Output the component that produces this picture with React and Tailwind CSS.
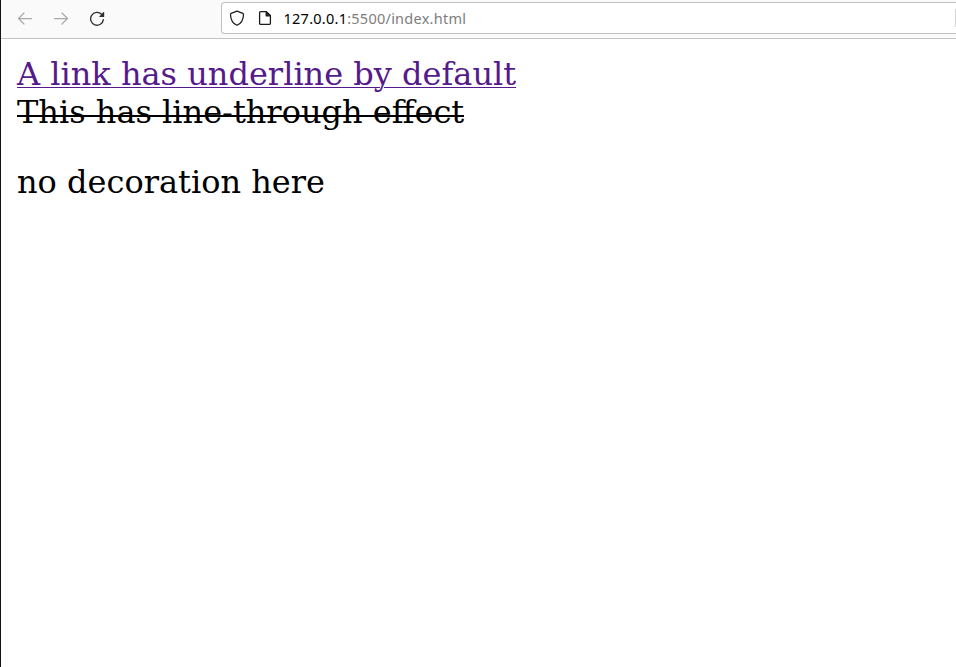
function BackIcon() {
  return (
    <svg className="size-4" viewBox="0 0 16 16" fill="none" stroke="#aaaaab" strokeWidth="1.25" strokeLinecap="round" strokeLinejoin="round">
      <path d="M14.6 8.5H1.5M7 3L1.5 8.5L7 14" />
    </svg>
  );
}

function ForwardIcon() {
  return (
    <svg className="size-4" viewBox="0 0 16 16" fill="none" stroke="#aaaaab" strokeWidth="1.25" strokeLinecap="round" strokeLinejoin="round">
      <path d="M1.4 8.5H14.5M9 3L14.5 8.5L9 14" />
    </svg>
  );
}

function ReloadIcon() {
  return (
    <svg className="size-4" viewBox="0 0 16 16" fill="none" stroke="#2f2f30" strokeWidth="1.35" strokeLinecap="round">
      <path d="M12.6 4.3A6.4 6.4 0 1 0 14.4 9.6" />
      <path d="M15.2 2.3V6.4Q15.2 7 14.6 7H10.5Q10 6.9 10.4 6.4L14.5 2.1Q15.1 1.7 15.2 2.3Z" fill="#2f2f30" stroke="none" />
    </svg>
  );
}

function ShieldIcon() {
  return (
    <svg className="size-4" viewBox="0 0 16 16" fill="none" stroke="#1c1c1d" strokeWidth="1.25" strokeLinejoin="round">
      <path d="M8 1.1L13.8 3.3Q14.5 3.6 14.5 4.4C14.4 9 12.7 13.2 8 15.3C3.3 13.2 1.6 9 1.5 4.4Q1.5 3.6 2.2 3.3Z" />
    </svg>
  );
}

function PageIcon() {
  return (
    <svg className="size-4" viewBox="0 0 16 16" fill="none" stroke="#1c1c1d" strokeWidth="1.3" strokeLinejoin="round">
      <path d="M3.7 1.6H9.2L13.4 5.8V13.2Q13.4 14.4 12.2 14.4H3.7Q2.6 14.4 2.6 13.2V2.8Q2.6 1.6 3.7 1.6Z" />
      <path d="M9.2 1.6V5.8H13.4Z" fill="#1c1c1d" />
    </svg>
  );
}

export default function App() {
  return (
    <div className="flex h-[667px] w-[956px] flex-col overflow-hidden border-l border-[#1b0f17] bg-white">
      <header className="flex h-[39px] shrink-0 items-start border-b border-[#c3c3c4] bg-[#fafafb]">
        <nav className="flex w-[220px] shrink-0 gap-5 pt-2.5 pl-4">
          <button aria-label="Back"><BackIcon /></button>
          <button aria-label="Forward"><ForwardIcon /></button>
          <button aria-label="Reload"><ReloadIcon /></button>
        </nav>
        <div className="mt-0.5 flex h-8 flex-1 items-center rounded-l border border-r-0 border-[#c0c0c1] bg-white pl-[7px]">
          <ShieldIcon />
          <span className="ml-3 flex"><PageIcon /></span>
          <p className="ml-[10.5px] whitespace-nowrap font-['Noto_Sans',sans-serif] text-[14.5px] leading-5 tracking-[0.25px] text-[#7d7d7e]">
            <span className="text-black">127.0.0.1</span>:5500/index.html
          </p>
          <span className="ml-auto h-[18px] w-px bg-[#d5d5d6]" />
        </div>
      </header>
      <main className="px-4 pt-4 font-['DejaVu_Serif',serif] text-[32px] leading-[38px] text-black">
        <a href="#" className="block w-fit text-[#551a8b] underline decoration-1 underline-offset-2">A link has underline by default</a>
        <p className="relative w-fit after:absolute after:inset-x-0 after:top-[22px] after:h-0.5 after:bg-black">This has line-through effect</p>
        <p className="mt-8">no decoration here</p>
      </main>
    </div>
  );
}
